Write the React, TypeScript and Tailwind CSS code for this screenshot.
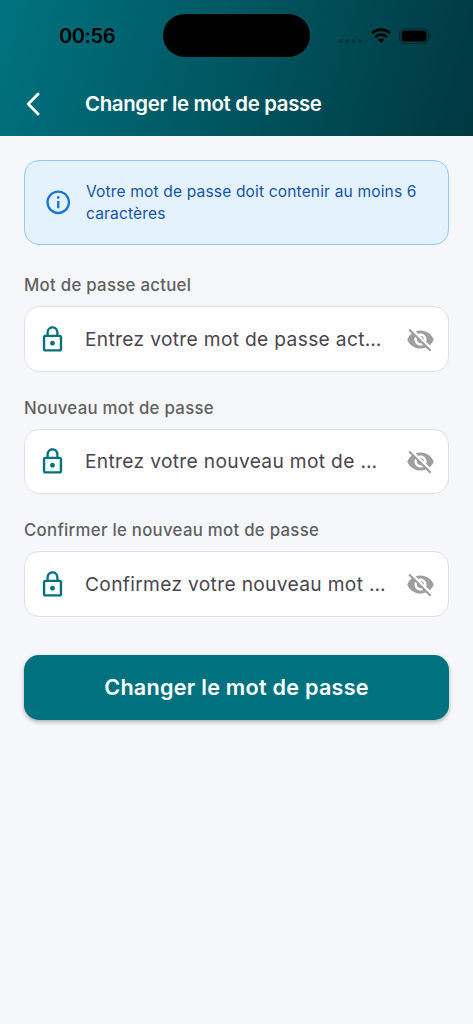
import { useState } from 'react';
import { MdInfoOutline, MdLockOutline, MdVisibility, MdVisibilityOff } from 'react-icons/md';

interface PasswordFieldProps {
    label: string;
    placeholder: string;
}

function StatusBar() {
    return (
        <div className="flex h-[71px] items-start">
            <span className="mt-[22px] ml-[59px] w-[104px] text-[20px] leading-[28px] font-semibold tracking-[-0.4px] text-black">
                00:56
            </span>
            <div className="mt-[14px] h-[43px] w-[147px] rounded-full bg-black" />
            <svg className="mt-[39px] ml-[29px]" width="23" height="4" viewBox="0 0 23 4" fill="#000" opacity="0.25">
                <circle cx="2" cy="2" r="2" />
                <circle cx="8.3" cy="2" r="2" />
                <circle cx="14.6" cy="2" r="2" />
                <circle cx="20.9" cy="2" r="2" />
            </svg>
            <svg className="mt-[28px] ml-[8.5px]" width="20" height="15" viewBox="0 0 20 15" fill="none" stroke="#000">
                <path d="M1 5.2a13 13 0 0 1 18 0" strokeWidth="2.7" />
                <path d="M4.2 9a8.4 8.4 0 0 1 11.6 0" strokeWidth="2.7" />
                <path d="M10 15l-3.1-3.2a4.6 4.6 0 0 1 6.2 0z" fill="#000" stroke="none" />
            </svg>
            <svg className="mt-[28px] ml-[8.5px]" width="33" height="16" viewBox="0 0 33 16">
                <rect x="0.6" y="0.6" width="28.8" height="14.8" rx="4.8" fill="none" stroke="#000" strokeOpacity="0.35" strokeWidth="1.2" />
                <rect x="2.6" y="2.6" width="24.8" height="10.8" rx="3.2" fill="#000" />
                <path d="M30.7 5.5c1.8.8 1.8 4.2 0 5z" fill="#000" opacity="0.4" />
            </svg>
        </div>
    );
}

function PasswordField({ label, placeholder }: PasswordFieldProps) {
    const [visible, setVisible] = useState(false);

    return (
        <label className="block">
            <span className="block h-[22px] text-[16.8px] leading-[22px] font-medium tracking-[0.28px] text-[#616161]">
                {label}
            </span>
            <div className="mt-[10px] flex h-[65.5px] items-center rounded-[15px] border border-[#e0e0e0] bg-white pt-px pr-[13px] pl-[12.5px]">
                <MdLockOutline size={29} className="shrink-0 text-[#00727f]" />
                <input
                    type={visible ? 'text' : 'password'}
                    placeholder={placeholder}
                    className="ml-[18.5px] w-[301px] min-w-0 overflow-hidden text-[19.2px] tracking-[0.32px] text-ellipsis outline-none placeholder:text-[#49454f]"
                />
                <button type="button" onClick={() => setVisible(!visible)} className="ml-auto shrink-0 text-[#9e9e9e]">
                    {visible ? <MdVisibility size={29} /> : <MdVisibilityOff size={29} />}
                </button>
            </div>
        </label>
    );
}

export default function App() {
    return (
        <div className="min-h-screen w-full bg-[#f5f7fb] font-['Inter',sans-serif]">
            <header className="h-[136px] bg-linear-[106deg] from-[#007380] to-[#003840]">
                <StatusBar />
                <div className="flex h-[65px] items-center">
                    <button type="button" className="ml-[26px] text-white">
                        <svg width="14" height="24" viewBox="0 0 14 24" fill="none" stroke="currentColor" strokeWidth="2.8" strokeLinecap="round" strokeLinejoin="round">
                            <path d="M12.1 2L2.2 12l9.9 10" />
                        </svg>
                    </button>
                    <h1 className="ml-[45px] pt-[2px] text-[20.4px] font-semibold tracking-[-0.34px] text-white">
                        Changer le mot de passe
                    </h1>
                </div>
            </header>

            <main className="px-6 pt-6">
                <div className="flex h-[84.5px] items-center rounded-[15px] border border-[#90caf9] bg-[#e3f2fd] pl-[19px]">
                    <MdInfoOutline size={28.5} className="shrink-0 text-[#1976d2]" />
                    <p className="ml-[13.5px] w-[345px] pt-[2px] text-[15.6px] leading-[22px] tracking-[0.13px] text-[#1a52ab]">
                        Votre mot de passe doit contenir au moins 6 caractères
                    </p>
                </div>

                <div className="mt-[29.5px] space-y-[25px]">
                    <PasswordField label="Mot de passe actuel" placeholder="Entrez votre mot de passe actuel" />
                    <PasswordField label="Nouveau mot de passe" placeholder="Entrez votre nouveau mot de passe" />
                    <PasswordField label="Confirmer le nouveau mot de passe" placeholder="Confirmez votre nouveau mot de passe" />
                </div>

                <button
                    type="button"
                    className="mt-[38px] h-[65.5px] w-full rounded-[15px] bg-[#00727f] text-[21.6px] font-semibold tracking-[0.25px] text-white shadow-[0_2px_4px_rgba(0,0,0,0.3)]"
                >
                    Changer le mot de passe
                </button>
            </main>
        </div>
    );
}
